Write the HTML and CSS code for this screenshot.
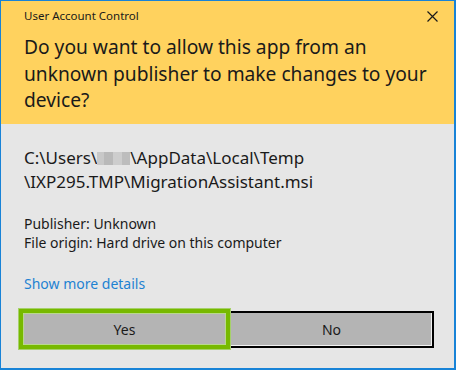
FILE: index.html
```html
<!DOCTYPE html>
<html lang="en">
  <head>
    <meta charset="UTF-8" />
    <meta name="viewport" content="width=device-width, initial-scale=1.0" />
    <title>User Account Control</title>
    <link rel="stylesheet" href="styles.css">
  </head>
  <body>
    <div class="dialog">
      <div class="header">
        <div class="title-row">
          <span class="title">User Account Control</span>
          <span class="close">
            <svg width="11" height="11" viewBox="0 0 11 11">
              <path d="M0.5 0.5 L10.5 10.5 M10.5 0.5 L0.5 10.5" stroke="#1a1a1a" stroke-width="1.2" fill="none" />
            </svg>
          </span>
        </div>
        <h1 class="question">Do you want to allow this app from an unknown publisher to make changes to your device?</h1>
      </div>

      <div class="content">
        <p class="path">C:\Users\<span class="blur"></span>\AppData\Local\Temp<br>\IXP295.TMP\MigrationAssistant.msi</p>
        <p class="meta">Publisher: Unknown<br>File origin: Hard drive on this computer</p>
        <a class="details" href="#">Show more details</a>

        <div class="buttons">
          <button class="btn btn-yes">Yes</button>
          <button class="btn btn-no">No</button>
        </div>
      </div>
    </div>
  </body>
</html>
```

FILE: styles.css
```css
body {
  margin: 0;
  padding: 0;
  font-family: "Noto Sans", "Open Sans", sans-serif;
  color: #1a1a1a;
  background-color: #e6e6e6;
}

.dialog {
  width: 456px;
  height: 370px;
  box-sizing: border-box;
  border-style: solid;
  border-color: #1883d7;
  border-width: 1px 2px 2px 1px;
  background-color: #e6e6e6;
  display: flex;
  flex-direction: column;
}

.header {
  background-color: #ffd25e;
  height: 123px;
  box-sizing: border-box;
  padding: 7px 0 0 23px;
}

.title-row {
  display: flex;
  align-items: center;
  justify-content: space-between;
  height: 16px;
}

.title {
  font-size: 11.5px;
  line-height: 16px;
}

.close {
  display: flex;
  width: 11px;
  height: 11px;
  margin-right: 16px;
}

.question {
  margin: 10px 0 0 0;
  font-size: 19.2px;
  font-weight: normal;
  line-height: 26.5px;
  width: 418px;
}

.content {
  padding: 22px 0 0 23px;
  display: flex;
  flex-direction: column;
  align-items: flex-start;
}

.path {
  margin: 0;
  font-size: 17px;
  line-height: 24px;
}

.blur {
  display: inline-block;
  width: 33px;
  height: 13px;
  vertical-align: -1px;
  background: linear-gradient(90deg, #c8c8c8 0 20%, #b9b9b9 20% 50%, #cdcdcd 50% 75%, #bdbdbd 75%);
}

.meta {
  margin: 20px 0 0 0;
  font-size: 14px;
  line-height: 19px;
}

.details {
  margin-top: 22px;
  font-size: 14px;
  line-height: 19px;
  color: #1e82d2;
  text-decoration: none;
}

.buttons {
  display: flex;
  align-items: center;
  margin-top: 15px;
  height: 42px;
}

.btn {
  font-family: inherit;
  font-size: 14px;
  color: #1a1a1a;
  background-color: #b4b4b4;
  padding: 0;
  box-sizing: border-box;
}

.btn-yes {
  width: 201px;
  height: 30px;
  border: none;
  position: relative;
  z-index: 1;
  box-shadow: 0 0 0 1px #b8d98c, 0 0 0 5px #77b900, 0 0 0 6px #a6d16a;
}

.btn-no {
  width: 205px;
  height: 37px;
  margin-left: 4px;
  border: 2px solid #000;
  box-shadow: inset -1px -1px 0 #f2f2f2;
}
```
